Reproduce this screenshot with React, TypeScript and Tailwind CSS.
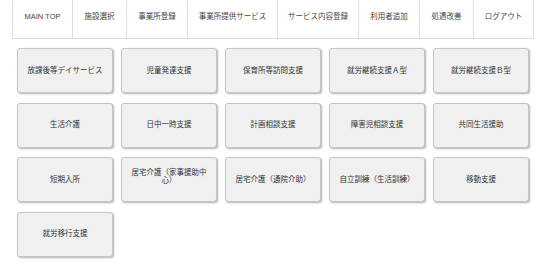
import React from "react";

const nav: [string, string][] = [
  ["MAIN TOP", "w-[60px]"],
  ["施設選択", "w-[54px]"],
  ["事業所登録", "w-[61px]"],
  ["事業所提供サービス", "w-[90px]"],
  ["サービス内容登録", "w-[81px]"],
  ["利用者追加", "w-[61px]"],
  ["処遇改善", "w-[54px]"],
  ["ログアウト", "w-[61px]"],
];

const buttons = [
  "放課後等デイサービス",
  "児童発達支援",
  "保育所等訪問支援",
  "就労継続支援Ａ型",
  "就労継続支援Ｂ型",
  "生活介護",
  "日中一時支援",
  "計画相談支援",
  "障害児相談支援",
  "共同生活援助",
  "短期入所",
  "居宅介護（家事援助中心）",
  "居宅介護（通院介助）",
  "自立訓練（生活訓練）",
  "移動支援",
  "就労移行支援",
];

export default function App() {
  return (
    <div
      className="w-[550px] h-[270px] bg-white overflow-hidden"
      style={{ fontFamily: '"Liberation Sans", "Noto Sans CJK JP", sans-serif' }}
    >
      <div className="flex ml-[12px] h-[39px]">
        {nav.map(([t, w], i) => (
          <div
            key={t}
            className={`${w} h-full flex items-center justify-center pb-[5px] border-l border-b border-[#dedede] text-[7.5px] text-[#444] ${
              i === nav.length - 1 ? "border-r" : ""
            }`}
          >
            {t}
          </div>
        ))}
      </div>
      <div className="grid grid-cols-[repeat(5,96px)] gap-x-[8px] gap-y-[9.5px] ml-[17px] mt-[9px]">
        {buttons.map((b) => (
          <div
            key={b}
            className="h-[45px] flex items-center justify-center px-[8px] text-center bg-[#f0f0f0] border border-[#c4c4c4] rounded-[3px] shadow-[1px_1px_2px_rgba(0,0,0,0.3)] text-[7.5px] leading-[8px] text-[#333]"
          >
            <span className={b.length > 11 ? "-mt-[6px]" : ""}>{b}</span>
          </div>
        ))}
      </div>
    </div>
  );
}
